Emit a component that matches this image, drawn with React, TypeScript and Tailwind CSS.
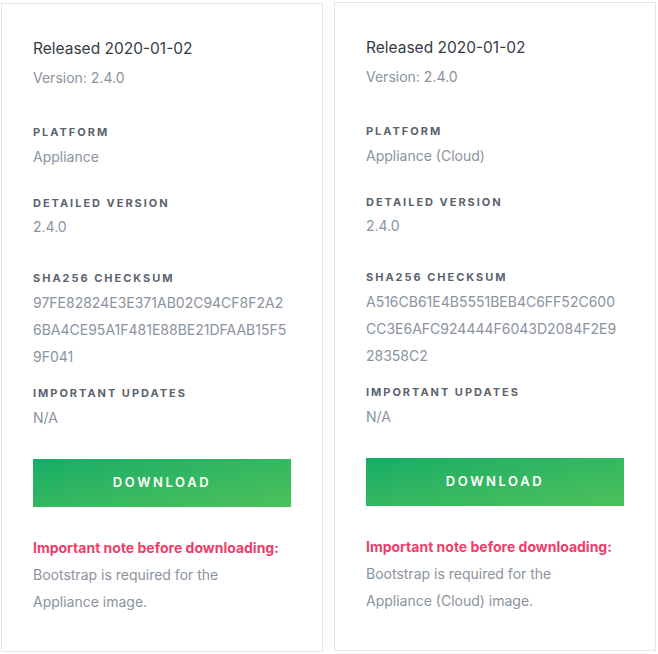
import React from "react";

type Release = {
  released: string;
  version: string;
  platform: string;
  detailedVersion: string;
  checksum: string[];
  updates: string;
  platformName: string;
};

const releases: Release[] = [
  {
    released: "2020-01-02",
    version: "2.4.0",
    platform: "Appliance",
    detailedVersion: "2.4.0",
    checksum: [
      "97FE82824E3E371AB02C94CF8F2A2",
      "6BA4CE95A1F481E88BE21DFAAB15F5",
      "9F041",
    ],
    updates: "N/A",
    platformName: "Appliance",
  },
  {
    released: "2020-01-02",
    version: "2.4.0",
    platform: "Appliance (Cloud)",
    detailedVersion: "2.4.0",
    checksum: [
      "A516CB61E4B5551BEB4C6FF52C600",
      "CC3E6AFC924444F6043D2084F2E9",
      "28358C2",
    ],
    updates: "N/A",
    platformName: "Appliance (Cloud)",
  },
];

const Label = ({ children, className }: { children: React.ReactNode; className: string }) => (
  <div
    className={`text-[11px] leading-[18px] font-bold uppercase tracking-[0.18em] text-[#5b636e] ${className}`}
  >
    {children}
  </div>
);

const ReleaseCard = ({ release, className }: { release: Release; className: string }) => {
  return (
    <div
      className={`w-[322px] border border-[#e3e7ee] bg-white px-[31px] pt-[33px] pb-[36px] ${className}`}
    >
      <div className="text-[15.5px] leading-[24px] text-[#353b45]">
        Released {release.released}
      </div>
      <div className="mt-[4px] text-[14px] leading-[26px] text-[#8a939e]">
        Version: {release.version}
      </div>

      <Label className="mt-[32px]">Platform</Label>
      <div className="mt-[3px] text-[14px] leading-[26px] text-[#8a939e]">
        {release.platform}
      </div>

      <Label className="mt-[24px]">Detailed Version</Label>
      <div className="mt-[2px] text-[14px] leading-[26px] text-[#8a939e]">
        {release.detailedVersion}
      </div>

      <Label className="mt-[29px]">SHA256 Checksum</Label>
      <div className="mt-[2px] text-[14px] leading-[27px] text-[#8a939e]">
        {release.checksum.map((line) => (
          <div key={line}>{line}</div>
        ))}
      </div>

      <Label className="mt-[14px]">Important Updates</Label>
      <div className="mt-[3px] text-[14px] leading-[26px] text-[#8a939e]">
        {release.updates}
      </div>

      <button className="mt-[28px] flex h-[48px] w-full items-center justify-center bg-gradient-to-br from-[#10ad67] to-[#4bc15a] text-[13px] font-semibold uppercase tracking-[0.2em] text-white">
        Download
      </button>

      <div className="mt-[28px] text-[14px] leading-[26px] font-bold text-[#ef3d6a]">
        Important note before downloading:
      </div>
      <div className="text-[14px] leading-[27px] text-[#8a939e]">
        <div>Bootstrap is required for the</div>
        <div>{release.platformName} image.</div>
      </div>
    </div>
  );
};

export default function App() {
  return (
    <div
      className="flex h-[654px] w-[658px] items-start gap-[11px] bg-white pl-[1px]"
      style={{ fontFamily: "Inter, 'Liberation Sans', sans-serif" }}
    >
      <ReleaseCard release={releases[0]} className="mt-[3px]" />
      <ReleaseCard release={releases[1]} className="mt-[2px]" />
    </div>
  );
}
